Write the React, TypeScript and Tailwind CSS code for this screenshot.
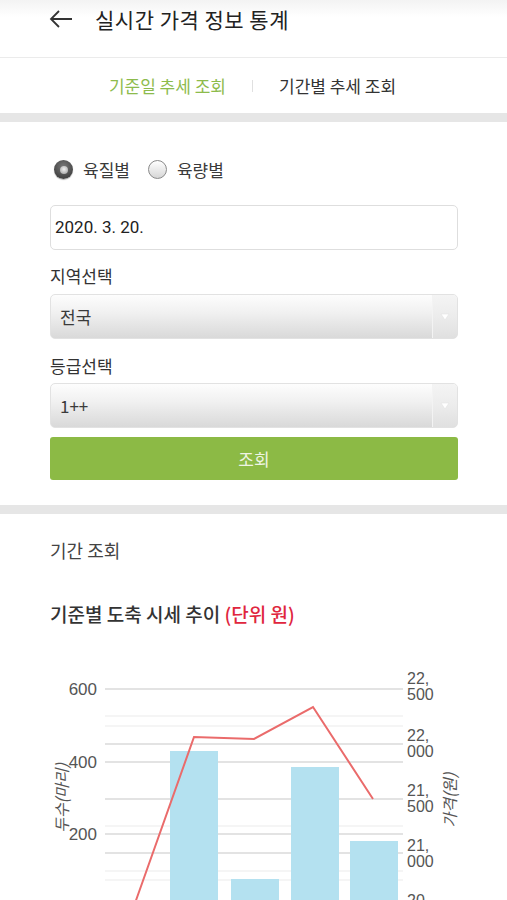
import React from "react";

const KR = "font-['Noto_Sans_CJK_KR','Noto_Sans',sans-serif]";

function Radio({ checked, label }: { checked: boolean; label: string }) {
  return (
    <div className="flex items-center gap-[10px]">
      {checked ? (
        <span className="flex h-[19px] w-[19px] items-center justify-center rounded-full bg-[radial-gradient(circle_at_50%_35%,#7a7a7a,#2f2f2f)] shadow-[0_1px_1px_rgba(0,0,0,0.3)]">
          <span className="h-[8px] w-[8px] rounded-full bg-[radial-gradient(circle_at_50%_40%,#f2f2f2,#9a9a9a)]" />
        </span>
      ) : (
        <span className="h-[19px] w-[19px] rounded-full border border-[#8a8a8a] bg-[linear-gradient(#ffffff,#d6d6d6)]" />
      )}
      <span className="text-[17px] leading-none text-[#3a3a3a]">{label}</span>
    </div>
  );
}

function Select({ value }: { value: string }) {
  return (
    <div className="flex h-[45px] overflow-hidden rounded-[5px] border border-[#e2e2e2] bg-[linear-gradient(#fdfdfd,#f1f1f1_40%,#d9d9d9)]">
      <div className="flex flex-1 items-center pl-[9px] text-[17px] text-[#3a3a3a]">{value}</div>
      <div className="flex w-[25px] items-center justify-center border-l border-[#f3f3f3] bg-[linear-gradient(#f4f4f4,#ececec_50%,#e0e0e0)]">
        <svg width="10" height="8" viewBox="0 0 10 8">
          <path d="M1 1 L9 1 L5 7 Z" fill="#ffffff" stroke="#e4e4e4" strokeWidth="0.6" />
        </svg>
      </div>
    </div>
  );
}

function TwoLine({ y, a, b }: { y: number; a: string; b?: string }) {
  return (
    <text x="407" y={y}>
      <tspan x="407">{a}</tspan>
      {b ? (
        <tspan x="407" dy="16">
          {b}
        </tspan>
      ) : null}
    </text>
  );
}

function Chart() {
  const minor = [716, 726, 826, 871, 880];
  const major = [689, 744, 762, 799, 834, 853];
  const bars = [
    { x: 110, top: 915 },
    { x: 170, top: 751 },
    { x: 231, top: 879 },
    { x: 291, top: 767 },
    { x: 350, top: 841 },
  ];
  const pts = "134,906 194,737 254,739 313,707 373,799";
  const lbl = "font-['Liberation_Sans',Arial,sans-serif]";
  return (
    <svg width="507" height="270" viewBox="0 660 507 270" className={lbl}>
      {minor.map((y) => (
        <line key={"m" + y} x1="105" x2="403" y1={y} y2={y} stroke="#ececec" strokeWidth="1.2" />
      ))}
      {major.map((y) => (
        <line key={"M" + y} x1="105" x2="403" y1={y} y2={y} stroke="#dadada" strokeWidth="1.3" />
      ))}
      {bars.map((b) => (
        <rect key={b.x} x={b.x} y={b.top} width="48" height={930 - b.top} fill="#b4e1f0" />
      ))}
      <polyline points={pts} fill="none" stroke="#ea6b6b" strokeWidth="2" strokeLinejoin="miter" />
      <g fill="#555" fontSize="17" textAnchor="end">
        <text x="97" y="695">600</text>
        <text x="97" y="768">400</text>
        <text x="97" y="840">200</text>
      </g>
      <g fill="#555" fontSize="16">
        <TwoLine y={684} a="22," b="500" />
        <TwoLine y={741} a="22," b="000" />
        <TwoLine y={796} a="21," b="500" />
        <TwoLine y={851} a="21," b="000" />
        <TwoLine y={906} a="20," />
      </g>
      <text
        x="0"
        y="0"
        fill="#555"
        fontSize="16"
        fontStyle="italic"
        textAnchor="middle"
        transform="translate(68 798) rotate(-90)"
        className="font-['Noto_Sans_CJK_KR',sans-serif]"
      >
        두수(마리)
      </text>
      <text
        x="0"
        y="0"
        fill="#555"
        fontSize="16"
        fontStyle="italic"
        textAnchor="middle"
        transform="translate(456 800) rotate(-90)"
        className="font-['Noto_Sans_CJK_KR',sans-serif]"
      >
        가격(원)
      </text>
    </svg>
  );
}

export default function App() {
  return (
    <div className={`w-[507px] bg-white ${KR}`}>
      <header className="flex h-[57px] items-start bg-[linear-gradient(#f3f3f3,#ffffff_30%)] pl-[49px] pt-[3px]">
        <div className="flex h-[32px] items-center gap-[22px]">
          <svg width="24" height="18" viewBox="0 0 24 18">
            <path d="M23 9 H2 M10 1 L2 9 L10 17" fill="none" stroke="#333" strokeWidth="1.8" />
          </svg>
          <span className="text-[21px] leading-none text-[#222] tracking-[0.5px]">실시간 가격 정보 통계</span>
        </div>
      </header>
      <div className="h-px bg-[#ebebeb]" />
      <nav className="flex h-[55px] items-center justify-center pr-[2px] text-[17px]">
        <span className="text-[#8dbb4c]">기준일 추세 조회</span>
        <span className="mx-[26px] h-[12px] w-px bg-[#e0e0e0]" />
        <span className="text-[#333]">기간별 추세 조회</span>
      </nav>
      <div className="h-[9px] bg-[#e6e6e6]" />

      <section className="px-[50px] pb-[25px] pr-[49px]">
        <div className="flex h-[58px] items-end gap-[18px] pl-[4px] pb-[1px]">
          <Radio checked label="육질별" />
          <Radio checked={false} label="육량별" />
        </div>
        <div className="mt-[25px] flex h-[45px] items-center rounded-[5px] border border-[#dedede] pl-[4px] font-['Roboto','Noto_Sans_CJK_KR',sans-serif] text-[17px] text-[#222]">
          2020. 3. 20.
        </div>
        <div className="flex h-[44px] items-center pt-[8px] text-[17px] text-[#333]">지역선택</div>
        <Select value="전국" />
        <div className="flex h-[44px] items-center pt-[10px] text-[17px] text-[#333]">등급선택</div>
        <Select value="1++" />
        <button className="mt-[9px] flex h-[43px] w-full items-center justify-center rounded-[3px] bg-[#8cba45] text-[17px] text-[#eef4e2]">
          조회
        </button>
      </section>
      <div className="h-[9px] bg-[#e6e6e6]" />

      <section className="px-[50px]">
        <div className="flex h-[72px] items-center text-[18px] text-[#444]">기간 조회</div>
        <div className="flex h-[56px] items-center text-[19px] font-medium text-[#333]">
          기준별 도축 시세 추이&nbsp;<span className="text-[#e0263e]">(단위 원)</span>
        </div>
      </section>
      <div className="mt-[18px]">
        <Chart />
      </div>
    </div>
  );
}
